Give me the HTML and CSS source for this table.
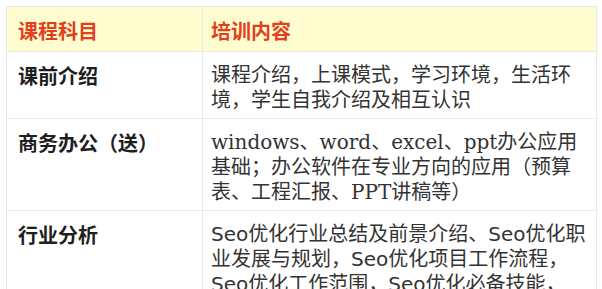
FILE: index.html
```html
<!DOCTYPE html>
<html lang="zh-CN">
<head>
<meta charset="utf-8">
<title>课程内容</title>
<link rel="stylesheet" href="styles.css">
</head>
<body>
<div class="page">
  <table class="course">
    <thead>
      <tr>
        <th class="col-subject">课程科目</th>
        <th class="col-content">培训内容</th>
      </tr>
    </thead>
    <tbody>
      <tr>
        <td class="col-subject">课前介绍</td>
        <td class="col-content">课程介绍，上课模式，学习环境，生活环境，学生自我介绍及相互认识</td>
      </tr>
      <tr>
        <td class="col-subject">商务办公（送）</td>
        <td class="col-content">windows、word、excel、ppt办公应用基础；办公软件在专业方向的应用（预算表、工程汇报、PPT讲稿等）</td>
      </tr>
      <tr>
        <td class="col-subject">行业分析</td>
        <td class="col-content"><span class="latin">Seo</span>优化行业总结及前景介绍、<span class="latin">Seo</span>优化职业发展与规划，<span class="latin">Seo</span>优化项目工作流程，<span class="latin">Seo</span>优化工作范围，<span class="latin">Seo</span>优化必备技能，<span class="latin">Seo</span>优化人员职业素养</td>
      </tr>
    </tbody>
  </table>
</div>
</body>
</html>
```

FILE: styles.css
```css
html, body {
  margin: 0;
  padding: 0;
  background: #ffffff;
}

.page {
  padding: 6px 0 0 6px;
}

.course {
  width: 591px;
  border-collapse: collapse;
  table-layout: fixed;
  border: 1px solid #e6e6e6;
  font-size: 20px;
  line-height: 25px;
}

.course th,
.course td {
  border: 1px solid #e9e9e9;
  vertical-align: top;
  text-align: left;
  padding: 11px 8px 5px 8px;
}

.course th {
  background: #fffdd0;
  color: #e2401c;
  font-family: "Noto Sans CJK SC", sans-serif;
  font-weight: 700;
  padding-bottom: 8px;
}

.course th.col-subject,
.course td.col-subject {
  width: 196px;
  box-sizing: border-box;
  padding-left: 11px;
}

.course td.col-subject {
  color: #1e1e1e;
  font-family: "Noto Sans CJK SC", sans-serif;
  font-weight: 700;
}

.course td.col-content {
  color: #333333;
  font-family: "DejaVu Serif", "Noto Sans CJK SC", serif;
  font-weight: 400;
}

.course .latin {
  font-family: "DejaVu Sans", sans-serif;
}
```
